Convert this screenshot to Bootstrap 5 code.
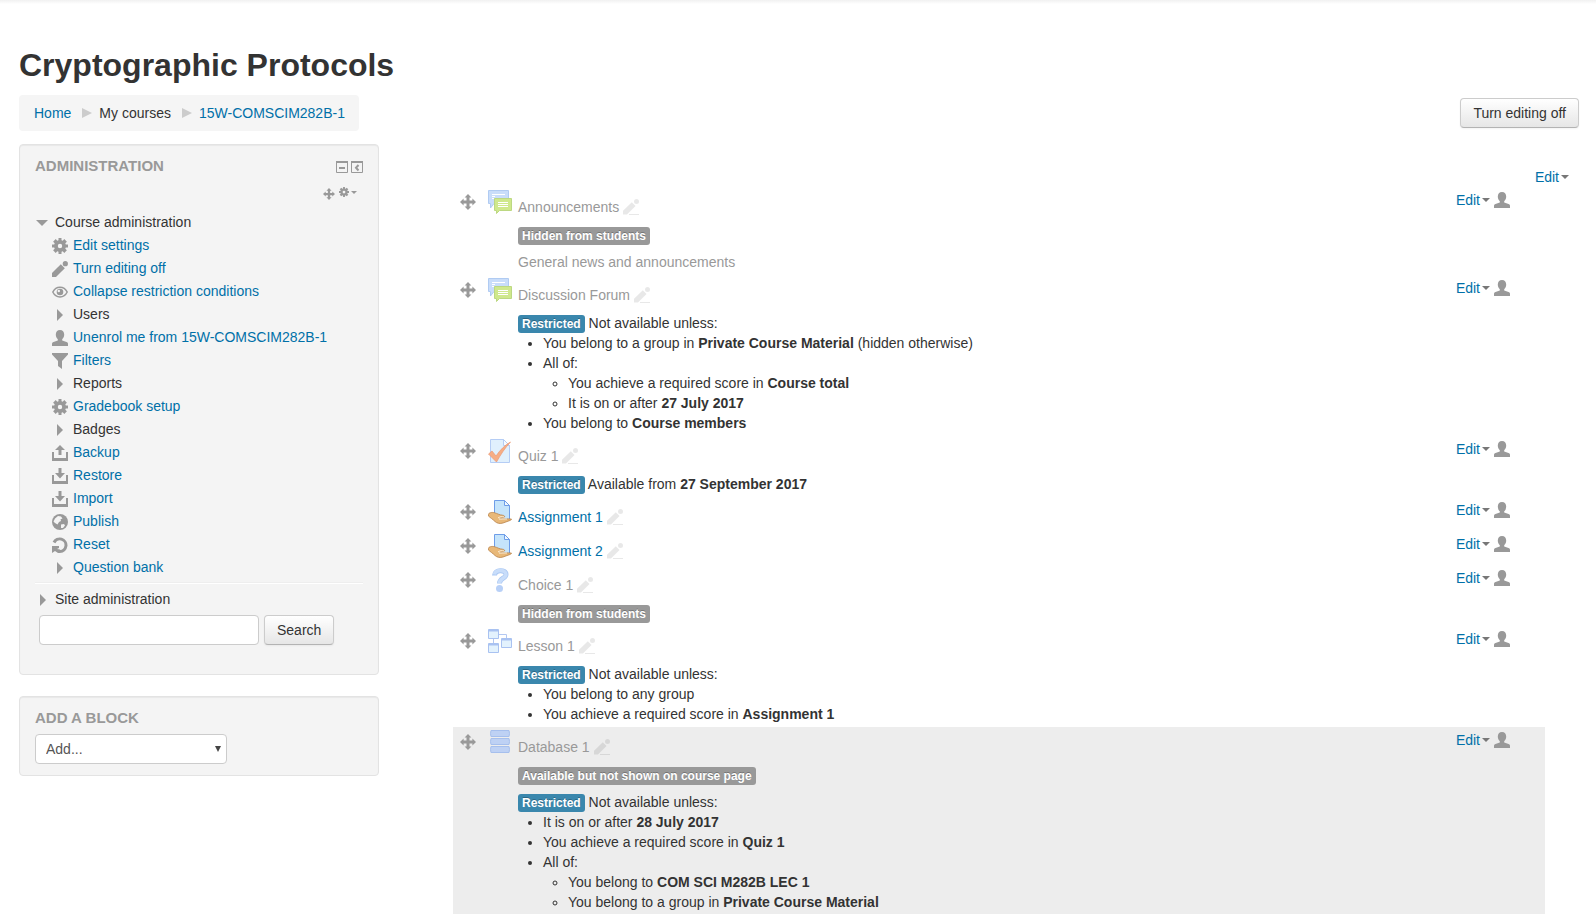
<!DOCTYPE html>
<html lang="en">
<head>
<meta charset="utf-8">
<meta name="viewport" content="width=device-width, initial-scale=1">
<title>Cryptographic Protocols</title>
<link href="https://cdn.jsdelivr.net/npm/bootstrap@5.3.0/dist/css/bootstrap.min.css" rel="stylesheet">
<style>
body{font:14px/20px "Liberation Sans",Arial,sans-serif;color:#333;background:#fff;overflow-x:hidden}
a{color:#0070a8;text-decoration:none}
a:hover{text-decoration:underline}
b{font-weight:700}
svg{display:block;flex:none}
.top-shadow{height:4px;background:linear-gradient(#f1f1f1,#fff)}
.page{padding:41px 17px 0 19px}
.page-title{font-size:32px;line-height:40px;font-weight:700;margin:0 0 10px}
.crumbs{background:#f5f5f5;border-radius:4px;padding:8px 14px 8px 15px}
.crumbs li{display:flex;align-items:center}
.crumbs li+li::before{content:"";border:5px solid transparent;border-left:10px solid #ccc;border-right:0;margin:0 7px 0 11px}
.tool-btn{font-size:14px;line-height:20px;padding:4px 12px;color:#333;border:1px solid #ccc;border-bottom-color:#b3b3b3;border-radius:4px;background:linear-gradient(#fff,#e6e6e6);box-shadow:inset 0 1px 0 rgba(255,255,255,.2),0 1px 2px rgba(0,0,0,.05)}
.course-row{--bs-gutter-x:40px;margin-top:13px}
.block{background:#f4f4f4;border:1px solid #e3e3e3;border-radius:4px;box-shadow:inset 0 1px 1px rgba(0,0,0,.05);padding:11px 15px}
.block+.block{margin-top:21px}
.block h2{font-size:15px;line-height:20px;font-weight:700;color:#999;text-transform:uppercase;margin:0}
.block-icons{gap:3px;padding-top:2px}
.block-tools{height:20px;margin:8px 6px 7px 0}
.tree,.tree ul{list-style:none;margin:0;padding:0}
.tree ul{padding-left:17px}
.tree .node{display:flex;align-items:center;gap:4px;line-height:23px}
.tree ul .node{gap:5px}
.tree .split{border-top:1px solid #eee;box-shadow:inset 0 1px #fff;margin-top:3px;padding-top:5px}
.finder{gap:5px;margin:4px 0 18px 4px}
.field,.picker{font-size:14px;line-height:20px;height:30px;border:1px solid #ccc;border-radius:4px;color:#555;background-color:#fff;box-shadow:none}
.field{width:220px;padding:4px 6px}
.picker{width:192px;padding:4px 10px;margin-top:6px;background-size:6px 6px;background-position:right 5px center;background-image:url("data:image/svg+xml,%3Csvg xmlns='http://www.w3.org/2000/svg' viewBox='0 0 6 6'%3E%3Cpath d='M0 0h6L3 6z' fill='%23444'/%3E%3C/svg%3E")}
.content-col{padding-top:23px}
.section-menu{padding-right:10px}
.activities{margin:0 34px;padding:0;list-style:none}
.activity{display:flex;align-items:flex-start;padding:3px 35px 0 7px}
.activity.stealth{background:#ededed}
.grip{margin:4px 12px 0 0}
.body-col{flex:1;margin-left:6px}
.act-name{display:flex;align-items:center;gap:4px;height:31px;padding-top:2px}
.dim{color:#999}
.avail{margin-top:4px}
.avail+.avail{margin-top:7px}
.avail:last-child{padding-bottom:3px}
.avail ul{margin:0;padding-left:25px;list-style:disc}
.avail ul ul{list-style:circle}
.flag{display:inline-block;font-size:12px;line-height:14px;font-weight:700;color:#fff;background:#999;border-radius:3px;padding:2px 4px;vertical-align:baseline;text-shadow:0 -1px 0 rgba(0,0,0,.25)}
.flag.info{background:#3a87ad}
.menu-link{display:flex;align-items:center}
.menu-link::after{content:"";border:4px solid transparent;border-top-color:#777;border-bottom:0;margin-left:2px}
.block-tools .menu-link::after{border-width:3px 3px 0;border-top-color:#999}
.actions{gap:4px}
</style>
</head>
<body>
<svg class="d-none" aria-hidden="true">
 <symbol id="move" viewBox="0 0 16 16"><path fill="#999" d="M8 0l3.400 3.600H9.500v2.900h2.900V4.600L16 8l-3.600 3.400V9.500H9.500v2.900h1.900L8 16l-3.400-3.600h1.900V9.500H3.600v1.900L0 8l3.600-3.400v1.900h2.900V3.600H4.600z"/></symbol>
 <symbol id="gear" viewBox="0 0 16 16"><path fill="#999" fill-rule="evenodd" d="M6.500 0h3v2.200l1.200.5 1.600-1.600 2.600 2.600-1.600 1.600.5 1.200H16v3h-2.200l-.5 1.200 1.600 1.600-2.600 2.600-1.600-1.600-1.200.5V16h-3v-2.200l-1.200-.5-1.600 1.600-2.600-2.600 1.600-1.600-.5-1.200H0v-3h2.200l.5-1.200L1.100 3.700l2.600-2.600 1.600 1.600 1.200-.5zM8 5.800a2.200 2.200 0 100 4.400 2.200 2.200 0 000-4.400z"/></symbol>
 <symbol id="pencil" viewBox="0 0 16 16"><path fill="#999" d="M0 16v-4l8.800-8.800 4 4L4 16z"/><circle cx="13.300" cy="2.700" r="2.600" fill="#999"/></symbol>
 <symbol id="rename" viewBox="0 0 16 16"><g fill="#000" fill-opacity=".09"><path d="M0 15.500v-3.800l8.800-8.500 3.800 3.800L4 15.500zM6 15h10v1H6z"/><circle cx="13.500" cy="2.500" r="2.500"/></g></symbol>
 <symbol id="eye" viewBox="0 0 16 16"><path fill="none" stroke="#999" stroke-width="1.500" d="M.8 8C4 1.500 12 1.500 15.200 8 12 14.500 4 14.500.8 8z"/><circle cx="8" cy="8" r="3.300" fill="#999"/><circle cx="6.800" cy="7" r="1.200" fill="#f4f4f4"/></symbol>
 <symbol id="right" viewBox="0 0 16 16"><path fill="#999" d="M5 2l6 6-6 6z"/></symbol>
 <symbol id="down" viewBox="0 0 16 16"><path fill="#999" d="M1 5h12l-6 6z"/></symbol>
 <symbol id="user" viewBox="0 0 16 16"><path fill="#999" d="M8 0c2.700 0 4.200 2 4.200 4.600 0 2-.8 3.700-2 4.700v1.200l4.300 1.500c1 .4 1.500 1 1.500 2V16H0v-2c0-1 .5-1.600 1.500-2l4.300-1.500V9.300c-1.200-1-2-2.700-2-4.700C3.800 2 5.300 0 8 0z"/></symbol>
 <symbol id="filter" viewBox="0 0 16 16"><path fill="#999" d="M0 0h16v1.500L10 8v8l-4-3V8L0 1.500z"/></symbol>
 <symbol id="up-tray" viewBox="0 0 16 16"><path fill="#999" d="M0 7h2v6h12V7h2v9H0zM8 0l5 5H9.500v5h-3V5H3z"/></symbol>
 <symbol id="down-tray" viewBox="0 0 16 16"><path fill="#999" d="M0 7h2v6h12V7h2v9H0zM6.500 0h3v5H13l-5 5.500L3 5h3.500z"/></symbol>
 <symbol id="globe" viewBox="0 0 16 16"><circle cx="8" cy="8" r="8" fill="#999"/><path fill="#f4f4f4" d="M3 4.500L6 2l3 .5 1.500 2-2 .8.5 1.700-2 1-1.500 2.500L3 9 1.500 7.500zM9 10.500l3-.5 1 1.500L11 14H9z"/></symbol>
 <symbol id="reset" viewBox="0 0 16 16"><path fill="none" stroke="#999" stroke-width="3" d="M2 5.500A6.300 6.300 0 118 14.500"/><path fill="#999" d="M0 9h7v2L5 12l3 .5V16H6l-3-2-3 2z"/></symbol>
 <symbol id="forum" viewBox="0 0 24 24"><path fill="#c9ddfa" stroke="#b0cbf2" d="M.5.500h20v13H6L2.500 18v-4.500h-2z"/><path stroke="#fff" d="M4 4.500h13M4 6.500h3M4 8.500h2"/><path fill="#cfe88c" stroke="#bcd882" d="M6.500 8.500h17v12h-12L8.500 23.500v-3h-2z"/><path stroke="#fff" d="M10 12.500h10M10 14.500h10M10 16.500h10"/></symbol>
 <symbol id="quiz" viewBox="0 0 24 24"><path fill="#e0f0fd" stroke="#b5cdf5" d="M2.500.500h13l6 6v17h-19z"/><path fill="#f8fcff" stroke="#b5cdf5" d="M15.500.500v6h6z"/><path fill="#f6ad85" stroke="#eb9a74" stroke-width=".7" d="M.5 15L4 12l4 5C12 11 17 6 22.500 3 17 9 13 15 8.500 23z"/></symbol>
 <symbol id="assign" viewBox="0 0 24 24"><path fill="#c5e4fb" stroke="#6e9de8" d="M6.500.500h10l5 5v14h-15z"/><path fill="#eff8ff" stroke="#6e9de8" d="M16.500.500v5h5z"/><path fill="#e8b878" stroke="#b98249" stroke-width=".8" d="M.4 14.500c0-1.500 3-2.600 6-1.800 3 .8 5 2.300 8 2.500 2 .2 3 1.300 1.500 2.300l-4 .7c3 .8 7 .6 11.500.8.500.5-.5 1-1.500 1.500L15 23c-3 1-6 .4-8-1.500-2-2-5-4-6.600-5.500z"/><path fill="none" stroke="#fdf0da" d="M10 18c2-1.500 4-1.500 6-1M11 19h8"/></symbol>
 <symbol id="choice" viewBox="0 0 24 24"><path fill="none" stroke="#abc8f3" stroke-width="5" d="M6.500 7.500C6.500 1.500 18 1 18 6.500c0 4-6.500 3.500-6.500 9"/><path fill="none" stroke="#c8ddfa" stroke-width="3.500" d="M6.500 6.500C7 1.500 18 1 18 6.500c0 4-6.500 3.500-6.500 8.500"/><circle cx="11.500" cy="20.500" r="3.500" fill="#b8d0f7"/></symbol>
 <symbol id="lesson" viewBox="0 0 24 24"><path fill="none" stroke="#b3c8f2" d="M11 5.500h7.500V9M5.500 10v4"/><path fill="#e3f2fd" stroke="#a9c2f1" d="M.5.500h10v9H.5zM.5 14.500h10v9H.5zM13.500 9.500h10v9h-10z"/><path stroke="#a9c2f1" stroke-width="2" d="M1 1.500h9M1 15.500h9M14 10.500h9"/></symbol>
 <symbol id="database" viewBox="0 0 24 24"><path fill="#bed1f4" stroke="#a6bfed" d="M3 .500h18q1 3 0 6H3q-1-3 0-6zM3 8.500h18q1 3 0 6H3q-1-3 0-6zM3 16.500h18q1 3 0 6H3q-1-3 0-6z"/></symbol>
 <symbol id="hide-block" viewBox="0 0 12 12"><path fill="none" stroke="#999" d="M.5.500h11v11H.5z"/><path stroke="#999" stroke-width="2" d="M0 1h12M3 7h6"/></symbol>
 <symbol id="dock-block" viewBox="0 0 12 12"><path fill="none" stroke="#999" d="M.5.500h11v11H.5z"/><path stroke="#999" stroke-width="2" d="M0 1h12"/><path fill="none" stroke="#999" stroke-width="2" d="M7.500 4L5 6.800l2.500 2.700"/></symbol>
</svg>

<div class="top-shadow"></div>
<div class="page">
  <header>
    <h1 class="page-title">Cryptographic Protocols</h1>
    <div class="d-flex justify-content-between align-items-center">
      <nav aria-label="Breadcrumb">
        <ol class="crumbs d-flex list-unstyled mb-0">
          <li><a href="#">Home</a></li>
          <li>My courses</li>
          <li><a href="#">15W-COMSCIM282B-1</a></li>
        </ol>
      </nav>
      <button type="button" class="btn tool-btn">Turn editing off</button>
    </div>
  </header>

  <div class="row course-row">
    <aside class="col-3">
      <section class="block">
        <div class="d-flex justify-content-between align-items-center">
          <h2>Administration</h2>
          <div class="block-icons d-flex">
            <a href="#" aria-label="Hide block"><svg width="12" height="12"><use href="#hide-block"/></svg></a>
            <a href="#" aria-label="Dock block"><svg width="12" height="12"><use href="#dock-block"/></svg></a>
          </div>
        </div>
        <div class="block-tools d-flex justify-content-end align-items-center">
          <a href="#" class="me-1" aria-label="Move block"><svg width="12" height="12"><use href="#move"/></svg></a>
          <a href="#" class="menu-link mb-1" aria-label="Block actions"><svg width="10" height="10"><use href="#gear"/></svg></a>
        </div>
        <ul class="tree">
          <li>
            <div class="node"><svg width="16" height="16"><use href="#down"/></svg>Course administration</div>
            <ul>
              <li class="node"><svg width="16" height="16"><use href="#gear"/></svg><a href="#">Edit settings</a></li>
              <li class="node"><svg width="16" height="16"><use href="#pencil"/></svg><a href="#">Turn editing off</a></li>
              <li class="node"><svg width="16" height="16"><use href="#eye"/></svg><a href="#">Collapse restriction conditions</a></li>
              <li class="node"><svg width="16" height="16"><use href="#right"/></svg>Users</li>
              <li class="node"><svg width="16" height="16"><use href="#user"/></svg><a href="#">Unenrol me from 15W-COMSCIM282B-1</a></li>
              <li class="node"><svg width="16" height="16"><use href="#filter"/></svg><a href="#">Filters</a></li>
              <li class="node"><svg width="16" height="16"><use href="#right"/></svg>Reports</li>
              <li class="node"><svg width="16" height="16"><use href="#gear"/></svg><a href="#">Gradebook setup</a></li>
              <li class="node"><svg width="16" height="16"><use href="#right"/></svg>Badges</li>
              <li class="node"><svg width="16" height="16"><use href="#up-tray"/></svg><a href="#">Backup</a></li>
              <li class="node"><svg width="16" height="16"><use href="#down-tray"/></svg><a href="#">Restore</a></li>
              <li class="node"><svg width="16" height="16"><use href="#down-tray"/></svg><a href="#">Import</a></li>
              <li class="node"><svg width="16" height="16"><use href="#globe"/></svg><a href="#">Publish</a></li>
              <li class="node"><svg width="16" height="16"><use href="#reset"/></svg><a href="#">Reset</a></li>
              <li class="node"><svg width="16" height="16"><use href="#right"/></svg><a href="#">Question bank</a></li>
            </ul>
          </li>
          <li class="split">
            <div class="node"><svg width="16" height="16"><use href="#right"/></svg>Site administration</div>
          </li>
        </ul>
        <form class="finder d-flex" role="search">
          <input type="text" class="form-control field" aria-label="Search administration">
          <button type="button" class="btn tool-btn">Search</button>
        </form>
      </section>
      <section class="block">
        <h2><label for="add-block">Add a block</label></h2>
        <select id="add-block" class="form-select picker"><option>Add...</option></select>
      </section>
    </aside>

    <main class="col-9 content-col">
      <div class="section-menu d-flex justify-content-end"><a href="#" class="menu-link">Edit</a></div>
      <ul class="activities">
        <li class="activity">
          <svg class="grip" width="16" height="16"><use href="#move"/></svg>
          <svg width="24" height="24"><use href="#forum"/></svg>
          <div class="body-col">
            <div class="act-name"><a href="#" class="dim">Announcements</a><svg width="16" height="16"><use href="#rename"/></svg></div>
            <div class="avail"><span class="flag">Hidden from students</span></div>
            <div class="avail dim">General news and announcements</div>
          </div>
          <div class="actions d-flex align-items-center"><a href="#" class="menu-link">Edit</a><svg width="16" height="16"><use href="#user"/></svg></div>
        </li>
        <li class="activity">
          <svg class="grip" width="16" height="16"><use href="#move"/></svg>
          <svg width="24" height="24"><use href="#forum"/></svg>
          <div class="body-col">
            <div class="act-name"><a href="#" class="dim">Discussion Forum</a><svg width="16" height="16"><use href="#rename"/></svg></div>
            <div class="avail"><span class="flag info">Restricted</span> Not available unless:
              <ul>
                <li>You belong to a group in <b>Private Course Material</b> (hidden otherwise)</li>
                <li>All of:
                  <ul>
                    <li>You achieve a required score in <b>Course total</b></li>
                    <li>It is on or after <b>27 July 2017</b></li>
                  </ul>
                </li>
                <li>You belong to <b>Course members</b></li>
              </ul>
            </div>
          </div>
          <div class="actions d-flex align-items-center"><a href="#" class="menu-link">Edit</a><svg width="16" height="16"><use href="#user"/></svg></div>
        </li>
        <li class="activity">
          <svg class="grip" width="16" height="16"><use href="#move"/></svg>
          <svg width="24" height="24"><use href="#quiz"/></svg>
          <div class="body-col">
            <div class="act-name"><a href="#" class="dim">Quiz 1</a><svg width="16" height="16"><use href="#rename"/></svg></div>
            <div class="avail"><span class="flag info">Restricted</span> Available from <b>27 September 2017</b></div>
          </div>
          <div class="actions d-flex align-items-center"><a href="#" class="menu-link">Edit</a><svg width="16" height="16"><use href="#user"/></svg></div>
        </li>
        <li class="activity">
          <svg class="grip" width="16" height="16"><use href="#move"/></svg>
          <svg width="24" height="24"><use href="#assign"/></svg>
          <div class="body-col">
            <div class="act-name"><a href="#">Assignment 1</a><svg width="16" height="16"><use href="#rename"/></svg></div>
          </div>
          <div class="actions d-flex align-items-center"><a href="#" class="menu-link">Edit</a><svg width="16" height="16"><use href="#user"/></svg></div>
        </li>
        <li class="activity">
          <svg class="grip" width="16" height="16"><use href="#move"/></svg>
          <svg width="24" height="24"><use href="#assign"/></svg>
          <div class="body-col">
            <div class="act-name"><a href="#">Assignment 2</a><svg width="16" height="16"><use href="#rename"/></svg></div>
          </div>
          <div class="actions d-flex align-items-center"><a href="#" class="menu-link">Edit</a><svg width="16" height="16"><use href="#user"/></svg></div>
        </li>
        <li class="activity">
          <svg class="grip" width="16" height="16"><use href="#move"/></svg>
          <svg width="24" height="24"><use href="#choice"/></svg>
          <div class="body-col">
            <div class="act-name"><a href="#" class="dim">Choice 1</a><svg width="16" height="16"><use href="#rename"/></svg></div>
            <div class="avail"><span class="flag">Hidden from students</span></div>
          </div>
          <div class="actions d-flex align-items-center"><a href="#" class="menu-link">Edit</a><svg width="16" height="16"><use href="#user"/></svg></div>
        </li>
        <li class="activity">
          <svg class="grip" width="16" height="16"><use href="#move"/></svg>
          <svg width="24" height="24"><use href="#lesson"/></svg>
          <div class="body-col">
            <div class="act-name"><a href="#" class="dim">Lesson 1</a><svg width="16" height="16"><use href="#rename"/></svg></div>
            <div class="avail"><span class="flag info">Restricted</span> Not available unless:
              <ul>
                <li>You belong to any group</li>
                <li>You achieve a required score in <b>Assignment 1</b></li>
              </ul>
            </div>
          </div>
          <div class="actions d-flex align-items-center"><a href="#" class="menu-link">Edit</a><svg width="16" height="16"><use href="#user"/></svg></div>
        </li>
        <li class="activity stealth">
          <svg class="grip" width="16" height="16"><use href="#move"/></svg>
          <svg width="24" height="24"><use href="#database"/></svg>
          <div class="body-col">
            <div class="act-name"><a href="#" class="dim">Database 1</a><svg width="16" height="16"><use href="#rename"/></svg></div>
            <div class="avail"><span class="flag">Available but not shown on course page</span></div>
            <div class="avail"><span class="flag info">Restricted</span> Not available unless:
              <ul>
                <li>It is on or after <b>28 July 2017</b></li>
                <li>You achieve a required score in <b>Quiz 1</b></li>
                <li>All of:
                  <ul>
                    <li>You belong to <b>COM SCI M282B LEC 1</b></li>
                    <li>You belong to a group in <b>Private Course Material</b></li>
                  </ul>
                </li>
              </ul>
            </div>
          </div>
          <div class="actions d-flex align-items-center"><a href="#" class="menu-link">Edit</a><svg width="16" height="16"><use href="#user"/></svg></div>
        </li>
      </ul>
    </main>
  </div>
</div>
<script src="https://cdn.jsdelivr.net/npm/bootstrap@5.3.0/dist/js/bootstrap.bundle.min.js"></script>
</body>
</html>
